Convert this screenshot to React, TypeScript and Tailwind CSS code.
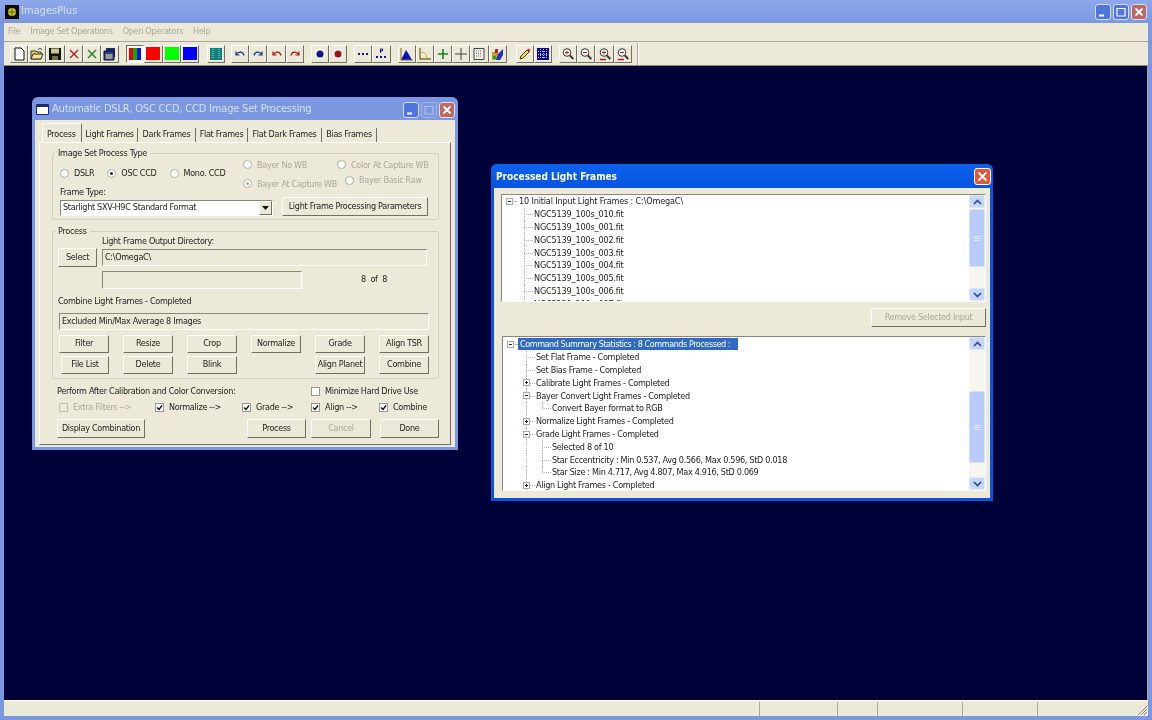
import type { ReactNode } from "react";

const raised =
  "border border-t-white border-l-white border-r-[#716f64] border-b-[#716f64] bg-[#ece9d8]";
const pressed =
  "border border-t-[#716f64] border-l-[#716f64] border-r-white border-b-white bg-[#f7f6f0]";
const sunken =
  "border border-t-[#8a8878] border-l-[#8a8878] border-r-white border-b-white bg-[#ece9d8]";

const WinButton = ({ kind, faded }: { kind: "min" | "max" | "close"; faded?: boolean }) => {
  const bg =
    kind === "close"
      ? "bg-[#c0675f]"
      : faded
        ? "bg-[#7f9be3]"
        : "bg-[#4f74dc]";
  return (
    <div
      className={`w-[16px] h-[16px] rounded-[3px] border border-[#d5dff8] ${bg} flex items-center justify-center ${faded ? "opacity-40" : ""}`}
    >
      <svg width="12" height="12" viewBox="0 0 12 12" fill="none" stroke="white">
        {kind === "min" && <path d="M2 9.500h5" strokeWidth="2" />}
        {kind === "max" && <path d="M2 2.500h8M2 2v8h8V2" strokeWidth="1.200" />}
        {kind === "close" && <path d="M2.500 2.500l7 7M9.500 2.500l-7 7" strokeWidth="1.800" />}
      </svg>
    </div>
  );
};

const Group = ({ label, className, children }: { label: string; className: string; children: ReactNode }) => (
  <div className={`relative border border-[#d0d0bf] rounded-[2px] ${className}`}>
    <span className="absolute -top-[7px] left-[2px] px-[3px] bg-[#ece9d8] leading-[12px]">{label}</span>
    {children}
  </div>
);

const Radio = ({ label, checked, disabled }: { label: string; checked?: boolean; disabled?: boolean }) => (
  <div className={`flex items-center gap-[5px] whitespace-nowrap ${disabled ? "text-[#aca899]" : ""}`}>
    <span className="w-[9px] h-[9px] rounded-full bg-white border border-[#b0ae9f] flex items-center justify-center shrink-0">
      {checked && <span className={`w-[3px] h-[3px] rounded-full ${disabled ? "bg-[#aca899]" : "bg-[#222]"}`} />}
    </span>
    {label}
  </div>
);

const Check = ({ label, checked, disabled }: { label: string; checked?: boolean; disabled?: boolean }) => (
  <div className={`flex items-center gap-[5px] whitespace-nowrap ${disabled ? "text-[#aca899]" : ""}`}>
    <span
      className={`w-[9px] h-[9px] border flex items-center justify-center shrink-0 ${
        disabled ? "bg-[#ece9d8] border-[#c0bfb0]" : "bg-white border-[#9a9889]"
      }`}
    >
      {checked && (
        <svg width="7" height="7" viewBox="0 0 7 7" fill="none" stroke="#111" strokeWidth="1.400">
          <path d="M1 3.500l2 2 3-4" />
        </svg>
      )}
    </span>
    {label}
  </div>
);

const Btn = ({ label, className, disabled }: { label: string; className: string; disabled?: boolean }) => (
  <button
    type="button"
    className={`${raised} flex items-center justify-center whitespace-nowrap ${disabled ? "text-[#aca899]" : ""} ${className}`}
  >
    {label}
  </button>
);

const ScrollBar = ({ top, thumb }: { top: number; thumb: number }) => (
  <div className="w-[16px] h-full bg-[#f6f5ee] flex flex-col justify-between shrink-0 relative">
    <div className="h-[13px] bg-[#c5d5fb] rounded-[2px] border border-[#dde6fd] flex items-center justify-center">
      <svg width="9" height="6" viewBox="0 0 9 6" fill="none" stroke="#2c4a94" strokeWidth="1.600">
        <path d="M1 5l3.500-3.500L8 5" />
      </svg>
    </div>
    <div
      className="absolute left-0 right-0 bg-[#b8cbfa] rounded-[2px] border border-[#d3dffc] flex flex-col items-center justify-center gap-[1px]"
      style={{ top, height: thumb }}
    >
      <span className="w-[6px] h-px bg-[#e2eafe]" />
      <span className="w-[6px] h-px bg-[#e2eafe]" />
      <span className="w-[6px] h-px bg-[#e2eafe]" />
    </div>
    <div className="h-[13px] bg-[#c5d5fb] rounded-[2px] border border-[#dde6fd] flex items-center justify-center">
      <svg width="9" height="6" viewBox="0 0 9 6" fill="none" stroke="#2c4a94" strokeWidth="1.600">
        <path d="M1 1l3.500 3.500L8 1" />
      </svg>
    </div>
  </div>
);

const Expander = ({ open }: { open: boolean }) => (
  <span className="w-[7px] h-[7px] border border-[#a5adae] bg-white flex items-center justify-center relative shrink-0 z-10">
    <span className="w-[3px] h-px bg-[#222]" />
    {!open && <span className="absolute w-px h-[3px] bg-[#222]" />}
  </span>
);

type Node = { text: string; level: 0 | 1 | 2; exp?: "open" | "closed"; last?: boolean; selected?: boolean };

const Stem = ({ cut, width, hasExp, open }: { cut?: boolean; width: string; hasExp?: boolean; open?: boolean }) => (
  <div className={`relative h-full shrink-0 ${width}`}>
    <div
      className={`absolute left-0 top-0 border-l border-dotted border-[#b5b5b5] ${cut ? "h-1/2" : "h-full"}`}
    />
    <div className="absolute left-0 right-0 top-1/2 border-t border-dotted border-[#b5b5b5]" />
    {hasExp && (
      <div className="absolute -left-[3px] top-[3px]">
        <Expander open={!!open} />
      </div>
    )}
  </div>
);

const TreeRow = ({ node, lineX }: { node: Node; lineX: number }) => (
  <div className="h-[12.800px] flex items-center whitespace-nowrap">
    {node.level === 0 && (
      <>
        <div className="w-[3px] shrink-0" />
        <Expander open />
        <span className="w-[2px] h-0 border-t border-dotted border-[#b5b5b5] mx-[1px]" />
        <span
          className={`leading-[12px] px-[2px] ${node.selected ? "bg-[#316ac5] text-white pr-[8px] tracking-[-0.45px]" : ""}`}
        >
          {node.text}
        </span>
      </>
    )}
    {node.level === 1 && (
      <>
        <div className="shrink-0" style={{ width: lineX }} />
        <Stem width="w-[9px]" hasExp={!!node.exp} open={node.exp === "open"} />
        <span className="pl-[1px] leading-[12px]">{node.text}</span>
      </>
    )}
    {node.level === 2 && (
      <>
        <div className="shrink-0" style={{ width: lineX }} />
        <div className="h-full w-[16px] shrink-0 border-l border-dotted border-[#b5b5b5]" />
        <Stem width="w-[9px]" cut={node.last} />
        <span className="pl-[1px] leading-[12px]">{node.text}</span>
      </>
    )}
  </div>
);

const inputFrames: Node[] = [
  { text: "10 Initial Input Light Frames : C:\\OmegaC\\", level: 0 },
  { text: "NGC5139_100s_010.fit", level: 1 },
  { text: "NGC5139_100s_001.fit", level: 1 },
  { text: "NGC5139_100s_002.fit", level: 1 },
  { text: "NGC5139_100s_003.fit", level: 1 },
  { text: "NGC5139_100s_004.fit", level: 1 },
  { text: "NGC5139_100s_005.fit", level: 1 },
  { text: "NGC5139_100s_006.fit", level: 1 },
  { text: "NGC5139_100s_007.fit", level: 1 },
];

const summary: Node[] = [
  { text: "Command Summary Statistics : 8 Commands Processed :", level: 0, selected: true },
  { text: "Set Flat Frame - Completed", level: 1 },
  { text: "Set Bias Frame - Completed", level: 1 },
  { text: "Calibrate Light Frames - Completed", level: 1, exp: "closed" },
  { text: "Bayer Convert Light Frames - Completed", level: 1, exp: "open" },
  { text: "Convert Bayer format to RGB", level: 2, last: true },
  { text: "Normalize Light Frames - Completed", level: 1, exp: "closed" },
  { text: "Grade Light Frames - Completed", level: 1, exp: "open" },
  { text: "Selected 8 of 10", level: 2 },
  { text: "Star Eccentricity : Min 0.537, Avg 0.566, Max 0.596, StD 0.018", level: 2 },
  { text: "Star Size : Min 4.717, Avg 4.807, Max 4.916, StD 0.069", level: 2, last: true },
  { text: "Align Light Frames - Completed", level: 1, exp: "closed" },
];

const Arrow = ({ color, flip }: { color: string; flip?: boolean }) => (
  <svg width="14" height="14" viewBox="0 0 14 14" fill="none" stroke={color} strokeWidth="1.200">
    <g transform={flip ? "translate(14 0) scale(-1 1)" : undefined}>
      <path d="M3 4.500v3.500h3.500M3.500 7.500C5 4.500 10 4 11 8.500" />
    </g>
  </svg>
);

const Svg = ({ children }: { children: ReactNode }) => (
  <svg width="14" height="14" viewBox="0 0 14 14">
    {children}
  </svg>
);

const Mag = ({ sign, color }: { sign: "+" | "-"; color?: string }) => (
  <Svg>
    <circle cx="6" cy="5.500" r="3.800" fill="#fff" stroke="#333" />
    <path d="M8.800 8.500l3.500 3.500" stroke="#333" strokeWidth="1.800" />
    <path d={sign === "+" ? "M4 5.500h4M6 3.500v4" : "M4 5.500h4"} stroke="#b02020" />
    {color && <path d="M2 12.500h6" stroke={color} strokeWidth="1.500" />}
  </Svg>
);

const toolGroups: { x: number; icons: ReactNode[]; active?: number }[] = [
  {
    x: 6,
    icons: [
      <Svg key="new">
        <path d="M3 1h6l3 3v9H3z" fill="#fff" stroke="#111" />
      </Svg>,
      <Svg key="open">
        <path d="M1 4h5l1 1h4v7H1z" fill="#e8d070" stroke="#333" />
        <path d="M3 7h10l-2 5H1z" fill="#f2e090" stroke="#333" />
        <path d="M8 3c1-2 3-2 4 0" fill="none" stroke="#333" />
      </Svg>,
      <Svg key="save">
        <path d="M1 1h12v12H1z" fill="#111" />
        <path d="M3 1.500h8v5H3z" fill="#c9c98a" />
        <path d="M4 9h6v4H4z" fill="#70704a" />
      </Svg>,
      <Svg key="x">
        <path d="M3 3l8 8M11 3l-8 8" stroke="#b02020" strokeWidth="1.400" />
      </Svg>,
      <Svg key="xg">
        <path d="M3 3l8 8M11 3l-8 8" stroke="#208020" strokeWidth="1.400" />
      </Svg>,
      <Svg key="win">
        <path d="M3 1h9v9H3z" fill="#1c2c70" />
        <path d="M1 4h10v9H1z" fill="#283a90" stroke="#111" />
        <path d="M2.500 7h7v5h-7z" fill="#9a9a9a" />
      </Svg>,
    ],
  },
  {
    x: 7,
    active: 0,
    icons: [
      <svg key="rgb" width="14" height="14" viewBox="0 0 14 14">
        <path d="M1 1h4v12H1z" fill="#f00000" />
        <path d="M5 1h4v12H5z" fill="#00b000" />
        <path d="M9 1h4v12H9z" fill="#1010e0" />
      </svg>,
      <div key="r" className="w-[14px] h-[13px] bg-[#f00]" />,
      <div key="g" className="w-[14px] h-[13px] bg-[#0f0]" />,
      <div key="b" className="w-[14px] h-[13px] bg-[#00f]" />,
    ],
  },
  {
    x: 8,
    icons: [
      <Svg key="teal">
        <path d="M1 1h12v12H1z" fill="#0f7f7f" />
        <path d="M4 2v10M10 2v10" stroke="#a9e0e0" strokeDasharray="1 1" />
      </Svg>,
    ],
  },
  {
    x: 6,
    icons: [
      <Arrow key="u1" color="#12308c" />,
      <Arrow key="r1" color="#12308c" flip />,
      <Arrow key="u2" color="#a01414" />,
      <Arrow key="r2" color="#a01414" flip />,
    ],
  },
  {
    x: 7,
    icons: [
      <Svg key="c1">
        <circle cx="7" cy="7" r="5.500" fill="#f4f4f4" />
        <circle cx="7" cy="7" r="3.500" fill="#0c1a80" />
      </Svg>,
      <Svg key="c2">
        <circle cx="7" cy="7" r="5.500" fill="#f4f4f4" />
        <circle cx="7" cy="7" r="3.500" fill="#a01418" />
      </Svg>,
    ],
  },
  {
    x: 7,
    icons: [
      <Svg key="dots">
        <path d="M2 6h2v2H2zM6 6h2v2H6zM10 6h2v2h-2z" fill="#10109a" />
      </Svg>,
      <Svg key="dotsP">
        <path d="M2 9h2v2H2zM6 9h2v2H6zM10 9h2v2h-2z" fill="#10109a" />
        <path d="M6.500 6V2h2v2h-2" fill="none" stroke="#10109a" />
      </Svg>,
    ],
  },
  {
    x: 7,
    icons: [
      <Svg key="hist">
        <path d="M1 13L6 3l2 3 4 7z" fill="#0a10c0" />
        <path d="M1 1v12h12" fill="none" stroke="#807018" />
      </Svg>,
      <Svg key="curve">
        <path d="M2 1v11h11" fill="none" stroke="#807018" strokeWidth="1.300" />
        <path d="M3 6c3-2 5 0 6 5" fill="none" stroke="#c8b040" />
      </Svg>,
      <Svg key="plus">
        <path d="M7 2v10M2 7h10" stroke="#0a8a1a" strokeWidth="1.600" />
      </Svg>,
      <Svg key="cross">
        <path d="M7 1v12M1 7h12" stroke="#444" />
      </Svg>,
      <Svg key="grid">
        <path d="M2 1.500h10v11H2z" fill="#f0f0e8" stroke="#444" />
        <path d="M4 4h6M4 6.500h6M4 9h6" stroke="#666" strokeDasharray="1 1" />
      </Svg>,
      <Svg key="bars">
        <path d="M1 5h6v8H1z" fill="#c8a020" />
        <path d="M7 7l5-5v6l-3 5H5z" fill="#2030c0" />
        <path d="M4 2h3v4H4z" fill="#c02020" />
        <path d="M2 9h3v3H2z" fill="#20a040" />
      </Svg>,
    ],
  },
  {
    x: 9,
    icons: [
      <Svg key="pencil">
        <path d="M2 12l1-3 6-6 2 2-6 6z" fill="#f4e040" stroke="#333" />
        <path d="M9 3l1.500-1.500 2 2L11 5z" fill="#d02020" />
      </Svg>,
      <Svg key="table">
        <path d="M1 1h12v12H1z" fill="#0a0a90" />
        <path d="M4.500 2v10M7.500 2v10M10.500 2v10M2 4.500h10M2 7.500h10M2 10.500h10" stroke="#c8c8e8" strokeDasharray="1 1" />
      </Svg>,
    ],
  },
  {
    x: 7,
    icons: [
      <Mag key="z1" sign="+" />,
      <Mag key="z2" sign="-" />,
      <Mag key="z3" sign="+" color="#b02020" />,
      <Mag key="z4" sign="-" color="#b02020" />,
    ],
  },
];

const processTabs = [
  { label: "Light Frames", w: "w-[56px]" },
  { label: "Dark Frames", w: "w-[58px]" },
  { label: "Flat Frames", w: "w-[52px]" },
  { label: "Flat Dark Frames", w: "w-[74px]" },
  { label: "Bias Frames", w: "w-[55px]" },
];

const actionButtons = [
  { label: "Filter" },
  { label: "Resize" },
  { label: "Crop" },
  { label: "Normalize" },
  { label: "Grade" },
  { label: "Align TSR" },
  { label: "File List", extra: "ml-[2px]" },
  { label: "Delete" },
  { label: "Blink" },
  null,
  { label: "Align Planet" },
  { label: "Combine" },
];

const App = () => {
  return (
    <div className="w-[1152px] h-[720px] overflow-hidden flex flex-col bg-[#7b97e0] font-['DejaVu_Sans_Condensed','Liberation_Sans',sans-serif] text-[9px] tracking-[-0.3px] text-[#222] blur-[0.35px]">
      {/* main title bar */}
      <div className="h-[23px] shrink-0 flex items-center pl-[5px] pr-[5px] bg-gradient-to-b from-[#8ea8ea] to-[#7b97e0]">
        <svg width="14" height="14" viewBox="0 0 14 14">
          <rect width="14" height="14" fill="#0a0a0a" />
          <circle cx="7" cy="7" r="4" fill="#c8c020" />
          <path d="M3 7h8M7 3v8" stroke="#6a6a10" />
        </svg>
        <span className="ml-[2px] text-[11px] tracking-normal text-[#d5e0f7]">ImagesPlus</span>
        <div className="ml-auto flex gap-[2px]">
          <WinButton kind="min" />
          <WinButton kind="max" />
          <WinButton kind="close" />
        </div>
      </div>

      <div className="flex-1 flex flex-col mx-[4px] min-h-0">
        {/* menu */}
        <div className="h-[18px] shrink-0 bg-[#ece9d8] flex items-center pl-[4px] text-[#aca899] gap-[10px]">
          <span>File</span>
          <span>Image Set Operations</span>
          <span>Open Operators</span>
          <span>Help</span>
        </div>

        {/* toolbar */}
        <div className="h-[25px] shrink-0 bg-[#ece9d8] border-t border-t-[#aca899] border-b border-b-[#8a8878] flex items-center">
          {toolGroups.map((group, i) => (
            <div key={i} className="flex" style={{ marginLeft: group.x }}>
              {group.icons.map((icon, j) => (
                <div
                  key={j}
                  className={`w-[18.200px] h-[18px] flex items-center justify-center ${group.active === j ? pressed : raised}`}
                >
                  {icon}
                </div>
              ))}
            </div>
          ))}
          <div className="ml-[5px] h-[22px] w-[2px] border-l border-l-[#aca899] border-r border-r-white" />
        </div>

        {/* MDI area */}
        <div className="relative flex-1 bg-[#000038] border-r border-[#aca899] min-h-0">
          <div className="absolute left-[28px] top-[31px] w-[426px] h-[353px] rounded-t-[6px] bg-[#7b97e0] flex flex-col">
            <div className="h-[23px] shrink-0 flex items-center pl-[4px] pr-[3px] pt-[2px] text-[#d5e0f7]">
              <div className="w-[13px] h-[11px] bg-white border border-[#1c2c70] border-t-[3px] rounded-[1px]" />
              <span className="ml-[3px] text-[11px] tracking-[-0.2px] font-medium whitespace-nowrap">
                Automatic DSLR, OSC CCD, CCD Image Set Processing
              </span>
              <div className="ml-auto flex gap-[2px]">
                <WinButton kind="min" />
                <WinButton kind="max" faded />
                <WinButton kind="close" />
              </div>
            </div>
            <div className="mx-[3px] mb-[3px] flex-1 bg-[#ece9d8] px-[4px] pt-[3px]">
              {/* tabs */}
              <div className="h-[19px] flex items-center pl-[3px]">
                <div className="w-[40px] h-[19px] pl-[4px] pt-[3px] flex items-center border-t border-l border-t-white border-l-white border-r border-r-[#716f64]">
                  Process
                </div>
                {processTabs.map((tab) => (
                  <div
                    key={tab.label}
                    className={`h-[14px] mt-[5px] flex items-center justify-center border-r border-r-[#716f64] whitespace-nowrap ${tab.w}`}
                  >
                    {tab.label}
                  </div>
                ))}
              </div>

              {/* tab panel */}
              <div className="h-[303px] w-[412px] border border-t-white border-l-white border-r-[#716f64] border-b-[#716f64] pt-[10px] pl-[12px]">
                <Group label="Image Set Process Type" className="w-[387px] h-[67px]">
                  <div className="flex h-[34px]">
                    <div className="w-[190px] pl-[7px] pt-[13px] flex items-start gap-[13px] leading-[12px]">
                      <Radio label="DSLR" />
                      <Radio label="OSC CCD" checked />
                      <Radio label="Mono. CCD" />
                    </div>
                    <div className="pt-[1px] grid grid-cols-[94px_auto] auto-rows-[19px] leading-[12px] h-fit">
                      <Radio label="Bayer No WB" disabled />
                      <Radio label="Color At Capture WB" disabled />
                      <Radio label="Bayer At Capture WB" checked disabled />
                      <div className="ml-[8px]">
                        <Radio label="Bayer Basic Raw" disabled />
                      </div>
                    </div>
                  </div>
                  <div className="flex items-end pl-[7px] h-[28px]">
                    <div className="w-[213px]">
                      <div className="leading-[9px] mb-[3px]">Frame Type:</div>
                      <div className={`h-[16px] flex items-center justify-between ${sunken} !bg-white pl-[2px]`}>
                        Starlight SXV-H9C Standard Format
                        <div className={`w-[13px] h-[14px] flex items-center justify-center ${raised}`}>
                          <svg width="7" height="4" viewBox="0 0 7 4">
                            <path d="M0 0h7L3.500 4z" fill="#111" />
                          </svg>
                        </div>
                      </div>
                    </div>
                    <Btn label="Light Frame Processing Parameters" className="w-[146px] h-[19px] ml-[9px]" />
                  </div>
                </Group>

                <Group label="Process" className="w-[387px] h-[148px] mt-[11px]">
                  <div className="pl-[49px] mt-[3px] leading-[12px]">Light Frame Output Directory:</div>
                  <div className="flex mt-[1px] pl-[5px]">
                    <Btn label="Select" className="w-[39px] h-[19px]" />
                    <div className={`ml-[5px] mt-[1px] w-[325px] h-[17px] pl-[2px] flex items-center ${sunken}`}>
                      C:\OmegaC\
                    </div>
                  </div>
                  <div className="flex items-center pl-[49px] mt-[4px]">
                    <div className={`w-[200px] h-[18px] ${sunken}`} />
                    <span className="ml-[59px]">8&nbsp; of&nbsp; 8</span>
                  </div>
                  <div className="pl-[5px] mt-[6px] leading-[12px]">Combine Light Frames - Completed</div>
                  <div className={`ml-[6px] mt-[6px] w-[370px] h-[17px] pl-[2px] flex items-center ${sunken}`}>
                    Excluded Min/Max Average 8 Images
                  </div>
                  <div className="grid grid-cols-[repeat(6,50px)] auto-rows-[18px] gap-x-[14px] gap-y-[3px] pl-[6px] mt-[5px]">
                    {actionButtons.map((b, i) =>
                      b ? (
                        <Btn key={b.label} label={b.label} className={b.extra ?? ""} />
                      ) : (
                        <div key={i} />
                      ),
                    )}
                  </div>
                </Group>

                {/* options */}
                <div className="flex items-center ml-[5px] mt-[6px] h-[13px]">
                  <div className="w-[254px]">Perform After Calibration and Color Conversion:</div>
                  <Check label="Minimize Hard Drive Use" />
                </div>
                <div className="flex items-center ml-[7px] mt-[3px] h-[13px]">
                  <div className="w-[96px]">
                    <Check label="Extra Filters -->" disabled />
                  </div>
                  <div className="w-[87px]">
                    <Check label="Normalize  -->" checked />
                  </div>
                  <div className="w-[69px]">
                    <Check label="Grade -->" checked />
                  </div>
                  <div className="w-[68px]">
                    <Check label="Align -->" checked />
                  </div>
                  <Check label="Combine" checked />
                </div>
                <div className="flex ml-[5px] mt-[5px]">
                  <Btn label="Display Combination" className="w-[88px] h-[19px]" />
                  <Btn label="Process" className="w-[59px] h-[19px] ml-[102px]" />
                  <Btn label="Cancel" className="w-[60px] h-[19px] ml-[5px]" disabled />
                  <Btn label="Done" className="w-[59px] h-[19px] ml-[9px]" />
                </div>
              </div>
            </div>
          </div>

          {/* results window */}
          <div className="absolute left-[487px] top-[98px] w-[502px] h-[337px] rounded-t-[6px] bg-[#0855dd] flex flex-col">
            <div className="h-[24px] shrink-0 flex items-center pl-[5px] pr-[2px] bg-gradient-to-b from-[#0a62ee] to-[#0854de] rounded-t-[6px]">
              <span className="text-[10px] tracking-normal font-bold text-white">Processed Light Frames</span>
              <div className="ml-auto w-[17px] h-[17px] rounded-[3px] border border-white bg-[#e0593a] flex items-center justify-center">
                <svg width="11" height="11" viewBox="0 0 11 11" fill="none" stroke="white" strokeWidth="1.800">
                  <path d="M1.500 1.500l8 8M9.500 1.500l-8 8" />
                </svg>
              </div>
            </div>
            <div className="mx-[3px] mb-[3px] flex-1 bg-[#ece9d8] flex flex-col pt-[6px] pl-[7px]">
              <div className={`w-[485px] h-[108px] flex ${sunken} !bg-white`}>
                <div className="flex-1 overflow-hidden pl-[1px] tracking-[-0.15px]">
                  {inputFrames.map((n) => (
                    <TreeRow key={n.text} node={n} lineX={21} />
                  ))}
                </div>
                <ScrollBar top={14} thumb={58} />
              </div>
              <Btn label="Remove Selected Input" disabled className="w-[115px] h-[19px] mt-[6px] ml-[370px]" />
              <div className={`w-[484px] h-[155px] mt-[9px] ml-[1px] flex ${sunken} !bg-white`}>
                <div className="flex-1 overflow-hidden pt-[1px] pl-[1px]">
                  {summary.map((n) => (
                    <TreeRow key={n.text} node={n} lineX={22} />
                  ))}
                </div>
                <ScrollBar top={54} thumb={72} />
              </div>
            </div>
          </div>
        </div>

        {/* status bar */}
        <div className="h-[16px] shrink-0 bg-[#ece9d8] border-t border-t-white flex pt-[1px] relative">
          <div className="w-[756px] border-r border-r-[#aca899]" />
          <div className="w-[78px] border-r border-r-[#aca899]" />
          <div className="w-[40px] border-r border-r-[#aca899]" />
          <div className="w-[85px] border-r border-r-[#aca899]" />
          <div className="w-[75px] border-r border-r-[#aca899]" />
          <div className="flex-1" />
          <svg width="12" height="12" viewBox="0 0 12 12" className="self-end" fill="none" stroke="#8a8878">
            <path d="M11 2l-9 9M11 5l-6 6M11 8l-3 3" />
          </svg>
        </div>
      </div>
      <div className="h-[4px] shrink-0" />
    </div>
  );
};

export default App;
